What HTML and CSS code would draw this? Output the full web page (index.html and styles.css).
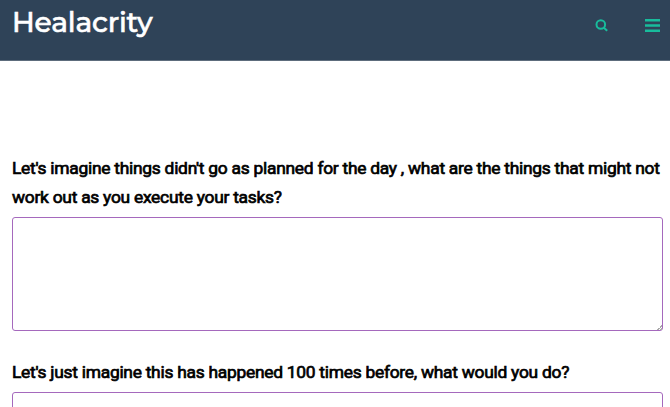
FILE: index.html
```html
<!DOCTYPE html>
<html lang="en">
<head>
    <meta charset="UTF-8">
    <meta name="viewport" content="width=device-width, initial-scale=1.0">
    <title>Healacrity</title>
    <link rel="stylesheet" href="styles.css">
</head>
<body>
    <header class="site-header">
        <a class="site-title" href="#">Healacrity</a>
        <div class="header-actions">
            <button class="icon-button" type="button" aria-label="Search">
                <svg class="search-icon" viewBox="0 0 13 13">
                    <circle cx="5.8" cy="5.5" r="4.3"/>
                    <path d="M8.8 8.7L12.2 11.8"/>
                </svg>
            </button>
            <button class="icon-button" type="button" aria-label="Menu">
                <svg class="menu-icon" viewBox="0 0 15 13">
                    <path d="M0 1.3h15M0 6.5h15M0 11.7h15"/>
                </svg>
            </button>
        </div>
    </header>

    <form class="entry-form">
        <div class="field">
            <label for="plan">Let's imagine things didn't go as planned for the day , what are the things that might not work out as you execute your tasks?</label>
            <textarea id="plan"></textarea>
        </div>
        <div class="field">
            <label for="response">Let's just imagine this has happened 100 times before, what would you do?</label>
            <textarea id="response"></textarea>
        </div>
    </form>
</body>
</html>
```

FILE: styles.css
```css
* {
    box-sizing: border-box;
}
body {
    margin: 0;
    background: #fff;
    color: #000;
    font-family: Roboto, sans-serif;
}

/* Header */
.site-header {
    display: flex;
    justify-content: space-between;
    height: 61px;
    padding: 5px 10px 0 12px;
    background: #2f4358;
    border-bottom: 1px solid #5d6c7c;
}
.site-title {
    color: #fff;
    font-family: Montserrat, Inter, sans-serif;
    font-size: 28px;
    font-weight: 500;
    letter-spacing: -0.15px;
    line-height: 34px;
    text-decoration: none;
    -webkit-text-stroke: 0.6px #fff;
}
.header-actions {
    display: flex;
    align-items: center;
    gap: 37px;
    height: 41px;
}
.icon-button {
    display: flex;
    padding: 0;
    border: 0;
    background: none;
}
.icon-button svg {
    fill: none;
    stroke: #18bc9c;
}
.search-icon {
    width: 13px;
    height: 13px;
    stroke-width: 2;
}
.menu-icon {
    width: 15px;
    height: 13px;
    stroke-width: 2.6;
}

/* Form */
.entry-form {
    height: 346px;
    padding: 93px 7px 0 12px;
    overflow: hidden;
}
.field {
    margin-bottom: 27px;
}
label {
    display: block;
    margin-bottom: 5.4px;
    font-size: 17.4px;
    font-weight: 400;
    letter-spacing: -0.265px;
    line-height: 28.6px;
    -webkit-text-stroke: 0.7px #000;
}
textarea {
    display: block;
    width: 100%;
    height: 114px;
    border: 1px solid #a569bd;
    border-radius: 3px;
    resize: vertical;
}
textarea::-webkit-resizer {
    background: linear-gradient(135deg, transparent 50%, #aaa 50%, #aaa 62%, transparent 62%, transparent 75%, #aaa 75%) right bottom / 5px 5px no-repeat;
}
```
